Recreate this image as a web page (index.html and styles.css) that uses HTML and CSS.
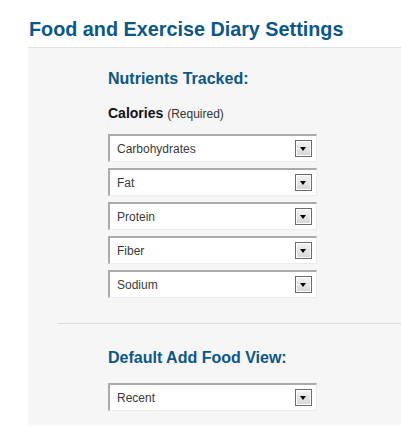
FILE: index.html
```html
<!DOCTYPE html>
<html>
<head>
<meta charset="utf-8">
<link rel="stylesheet" href="styles.css">
</head>
<body>
<h1 class="title">Food and Exercise Diary Settings</h1>
<div class="panel">
  <div class="section">
    <h2 class="heading">Nutrients Tracked:</h2>
    <div class="required"><b>Calories</b> <span>(Required)</span></div>
    <div class="selects">
      <div class="select"><span>Carbohydrates</span><i class="arrow"></i></div>
      <div class="select"><span>Fat</span><i class="arrow"></i></div>
      <div class="select"><span>Protein</span><i class="arrow"></i></div>
      <div class="select"><span>Fiber</span><i class="arrow"></i></div>
      <div class="select"><span>Sodium</span><i class="arrow"></i></div>
    </div>
  </div>
  <hr class="sep">
  <div class="section second">
    <h2 class="heading">Default Add Food View:</h2>
    <div class="selects">
      <div class="select"><span>Recent</span><i class="arrow"></i></div>
    </div>
  </div>
</div>
</body>
</html>
```
FILE: styles.css
```css
html, body { margin: 0; padding: 0; background: #fff; }
body { font-family: "Liberation Sans", Arial, sans-serif; width: 401px; height: 426px; overflow: hidden; }
.title { margin: 0; padding: 18px 0 0 29px; height: 29px; font-size: 19.8px; line-height: 23px; font-weight: bold; color: #0b5787; }
.panel { margin-left: 28px; border-top: 1px solid #e3e3e3; background: #f6f6f6; height: 377px; }
.section { padding-left: 80px; padding-top: 22px; }
.heading { margin: 0; font-size: 16px; line-height: 18px; font-weight: bold; color: #0b5787; }
.required { margin-top: 17px; font-size: 14px; line-height: 16px; color: #111; }
.required span { font-size: 12px; color: #333; }
.selects { margin-top: 12px; display: flex; flex-direction: column; gap: 6px; }
.select { box-sizing: border-box; width: 209px; height: 28px; background: #fff; border-style: solid; border-width: 2px 1px 1px 2px; border-color: #ababab #ececec #ececec #ababab; display: flex; align-items: center; justify-content: space-between; padding: 0 4px 0 7px; font-size: 12px; color: #3a3a3a; }
.arrow { box-sizing: border-box; width: 17px; height: 17px; border: 1px solid #6b6b6b; background: linear-gradient(#f4f4f4, #d6d6d6); position: relative; box-shadow: inset 0 0 0 1px #fff; }
.arrow::after { content: ""; position: absolute; left: 4px; top: 6px; border-left: 3.5px solid transparent; border-right: 3.5px solid transparent; border-top: 4px solid #000; }
.sep { margin: 25px 0 0 30px; border: 0; border-top: 1px solid #dcdcdc; height: 0; }
.second { padding-top: 25px; }
.second .selects { margin-top: 16px; }
```
